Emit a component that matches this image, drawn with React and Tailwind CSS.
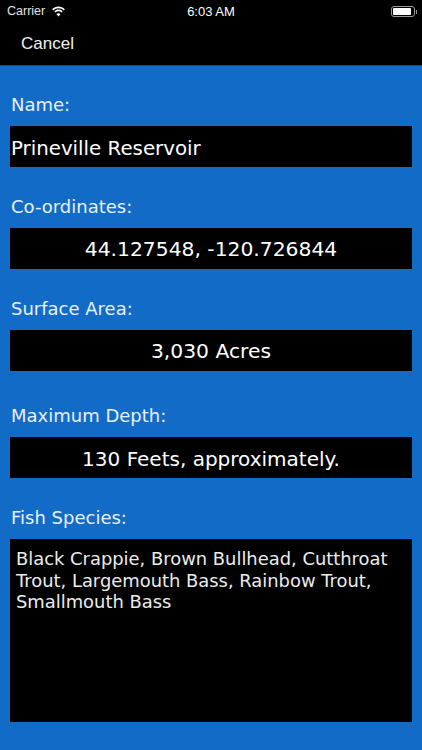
import React from "react";

const verdana = { fontFamily: '"DejaVu Sans", sans-serif' };

function Field({ label, value, center, className }) {
  return (
    <div className={className}>
      <p className="h-[24px] text-[18px] leading-[24px] text-[#e8f1fb] pl-[1px] font-['DejaVu_Sans',sans-serif]">{label}</p>
      <div className={`mt-[9px] h-[41px] pt-[2px] bg-black flex items-center text-white text-[20.300px] font-['DejaVu_Sans',sans-serif] ${center ? "justify-center" : ""}`}>
        {value}
      </div>
    </div>
  );
}

function Wifi() {
  return (
    <svg width="15" height="11" viewBox="0 0 15 11" fill="white">
      <path d="M7.5 2.3c2 0 3.8.8 5.2 2.1l1.1-1.2C12.1 1.6 9.9.6 7.5.6S2.9 1.6 1.2 3.2l1.1 1.2C3.7 3.1 5.5 2.3 7.5 2.3z" />
      <path d="M7.5 5.3c1.2 0 2.2.4 3 1.2l1.2-1.2C10.600 4.200 9.100 3.600 7.500 3.600s-3.100.6-4.200 1.700l1.200 1.200c.8-.8 1.800-1.200 3-1.200z" />
      <path d="M7.500 10.400l2.100-2.300c-.6-.5-1.300-.8-2.100-.8s-1.500.3-2.100.8z" />
    </svg>
  );
}

function Battery() {
  return (
    <div className="flex items-center">
      <div className="w-[24px] h-[11px] rounded-[3px] border border-[#9a9a9a] p-[1px]">
        <div className="h-full w-[18px] bg-white rounded-[1px]" />
      </div>
      <div className="ml-[1px] w-[1px] h-[4px] bg-[#9a9a9a]" />
    </div>
  );
}

export default function App() {
  return (
    <div className="w-[422px] h-[750px] bg-[#136bc8] flex flex-col overflow-hidden">
      <div className="h-[66px] bg-black border-b border-[#0d4f96] text-white font-['Liberation_Sans',sans-serif]">
        <div className="relative h-[22px] pt-[1px] flex items-center justify-between pl-[7px] pr-[5px]">
          <div className="flex items-center gap-[6px] text-[12.500px] text-[#e4e4e4]">
            <span>Carrier</span>
            <Wifi />
          </div>
          <span className="absolute left-0 right-0 text-center text-[13px] font-medium">6:03 AM</span>
          <Battery />
        </div>
        <div className="pl-[21px] mt-[9px] text-[17px] leading-[26px] text-[#f0f0f0]">Cancel</div>
      </div>

      <div className="px-[10px] flex flex-col">
        <Field label="Name:" value={<span className="pl-[1px] pt-[2px] text-[19.800px]">Prineville Reservoir</span>} className="mt-[27px]" />
        <Field label="Co-ordinates:" value="44.127548, -120.726844" center className="mt-[28px]" />
        <Field label="Surface Area:" value="3,030 Acres" center className="mt-[28px]" />
        <Field label="Maximum Depth:" value={<span className="text-[20px]">130 Feets, approximately.</span>} center className="mt-[33px]" />
        <div className="mt-[28px]">
          <p className="h-[24px] pl-[1px] text-[18px] leading-[24px] text-[#e8f1fb]" style={verdana}>Fish Species:</p>
          <div className="mt-[9px] h-[183px] bg-black px-[6px] pt-[9px] text-[17.900px] leading-[21.700px] text-[#ececec]" style={verdana}>
            Black Crappie, Brown Bullhead, Cutthroat Trout, Largemouth Bass, Rainbow Trout, Smallmouth Bass
          </div>
        </div>
      </div>
    </div>
  );
}
